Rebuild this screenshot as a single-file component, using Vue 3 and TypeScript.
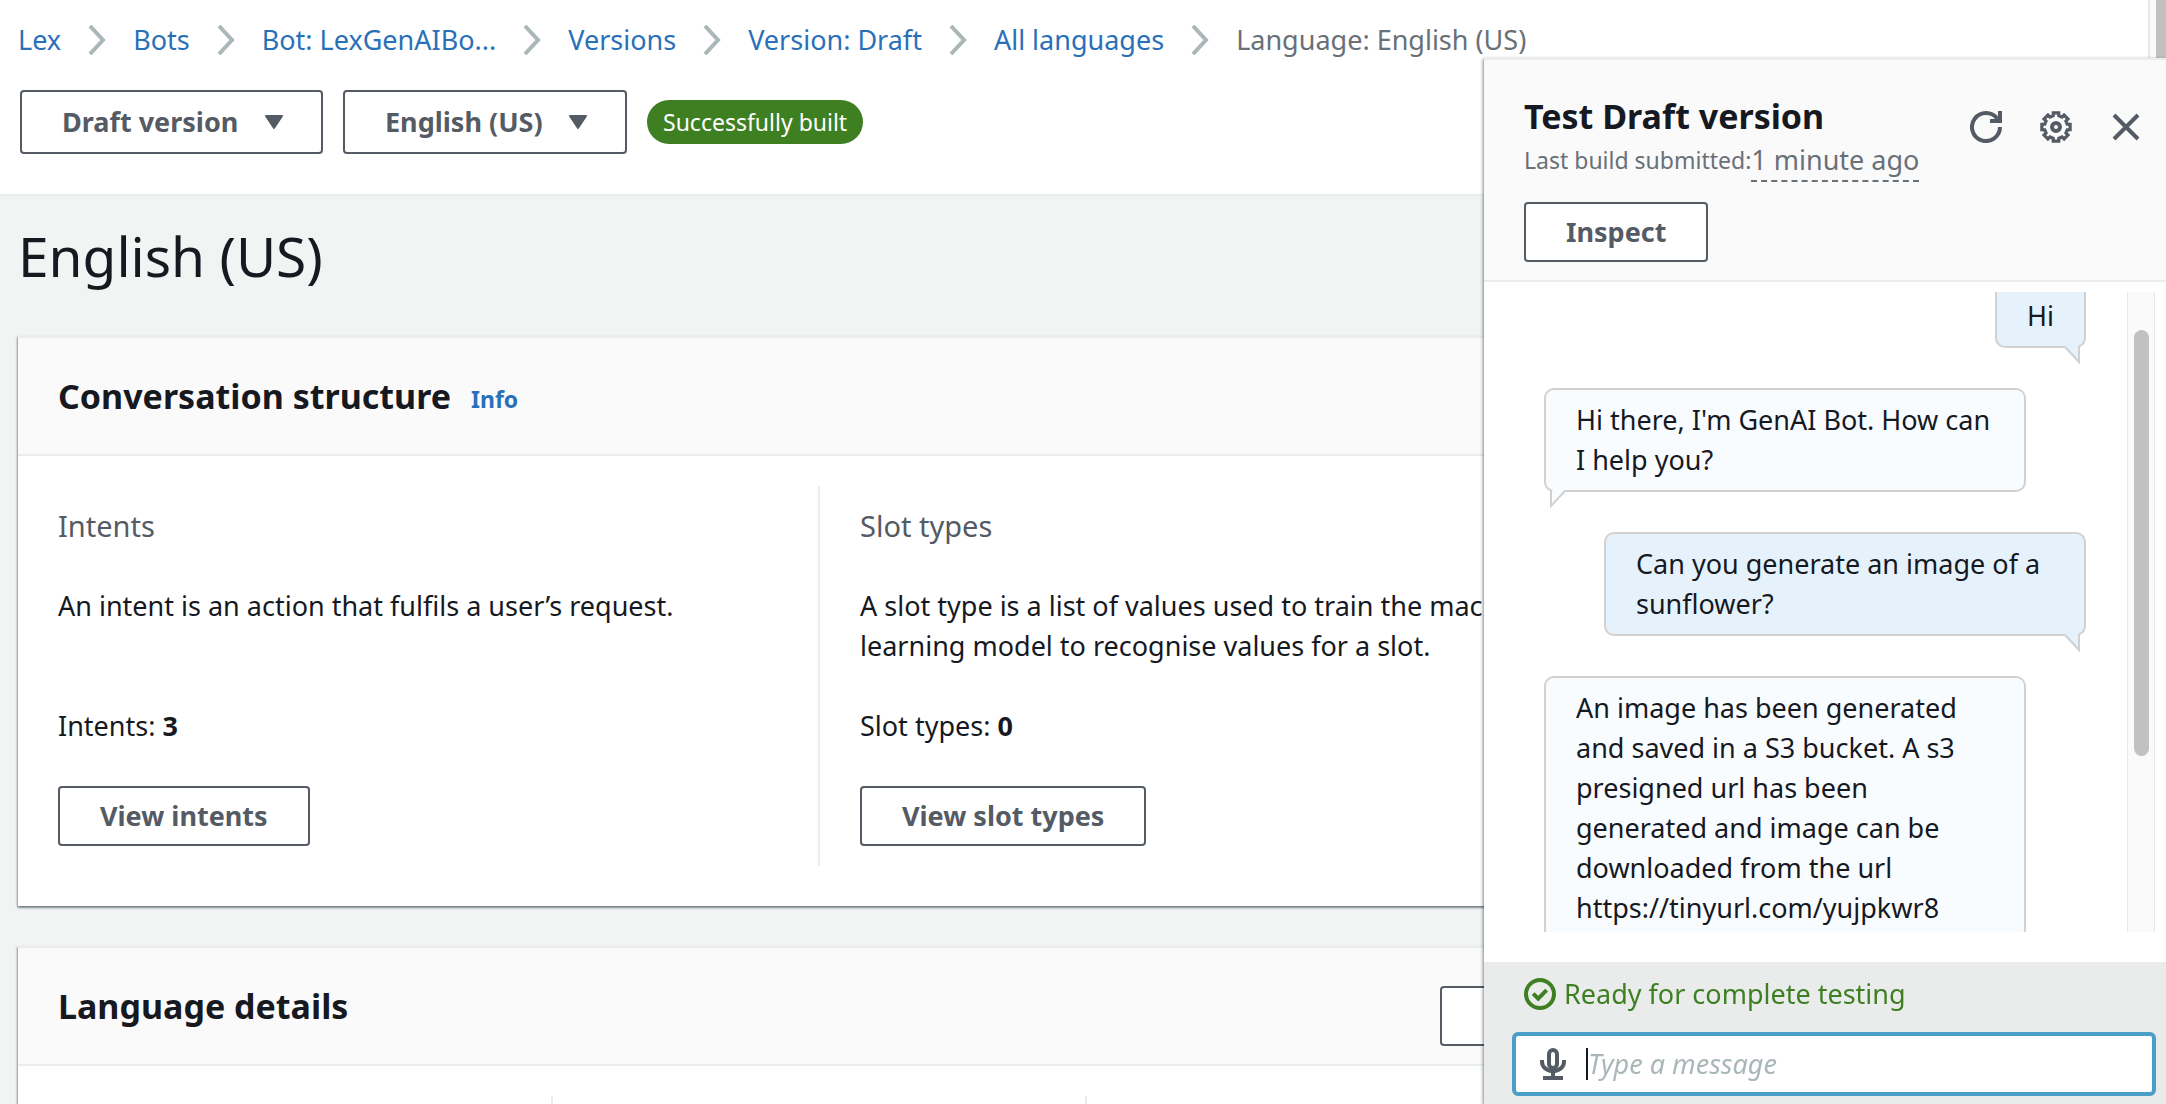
<script setup lang="ts">
import { onMounted, ref } from 'vue'

interface Message {
  from: 'user' | 'bot'
  text: string
}

const crumbs: string[] = ['Lex', 'Bots', 'Bot: LexGenAIBo...', 'Versions', 'Version: Draft', 'All languages']

const messages: Message[] = [
  { from: 'user', text: 'Hi' },
  { from: 'bot', text: "Hi there, I'm GenAI Bot. How can I help you?" },
  { from: 'user', text: 'Can you generate an image of a sunflower?' },
  {
    from: 'bot',
    text: 'An image has been generated and saved in a S3 bucket. A s3 presigned url has been generated and image can be downloaded from the url https://tinyurl.com/yujpkwr8',
  },
]

// Outline of the eight-toothed settings gear, centred in a 16-unit box.
function gearPath(): string {
  const points: string[] = []
  for (let tooth = 0; tooth < 8; tooth++) {
    const middle = tooth * 45
    const corners: [number, number][] = [[-14, 5.8], [-11, 7.2], [11, 7.2], [14, 5.8]]
    for (const [offset, radius] of corners) {
      const angle = ((middle + offset) * Math.PI) / 180
      points.push(`${(8 + radius * Math.cos(angle)).toFixed(2)} ${(8 + radius * Math.sin(angle)).toFixed(2)}`)
    }
  }
  return `M${points.join('L')}Z`
}

const gear = gearPath()
const draft = ref('')
const log = ref<HTMLElement | null>(null)

onMounted(() => {
  if (log.value) log.value.scrollTop = 8
})
</script>

<template>
  <div class="page">
    <header class="top">
      <nav class="crumbs" aria-label="Breadcrumb">
        <template v-for="crumb in crumbs" :key="crumb">
          <a href="#">{{ crumb }}</a>
          <svg class="chevron" viewBox="0 0 18 30" aria-hidden="true"><path d="M2 1 15 15 2 29" /></svg>
        </template>
        <span>Language: English (US)</span>
      </nav>
      <div class="controls">
        <div class="picker">
          <select aria-label="Version"><option>Draft version</option></select>
          <svg viewBox="0 0 20 16" aria-hidden="true"><path d="M2 2h16l-8 12z" /></svg>
        </div>
        <div class="picker">
          <select aria-label="Language"><option>English (US)</option></select>
          <svg viewBox="0 0 20 16" aria-hidden="true"><path d="M2 2h16l-8 12z" /></svg>
        </div>
        <span class="badge">Successfully built</span>
      </div>
    </header>

    <main class="main">
      <h1>English (US)</h1>

      <section class="card">
        <div class="card-head">
          <h2>Conversation structure</h2>
          <a class="info" href="#">Info</a>
        </div>
        <div class="columns two">
          <div class="column">
            <h3>Intents</h3>
            <p class="text">An intent is an action that fulfils a user’s request.</p>
            <p>Intents: <b>3</b></p>
            <button type="button" class="button">View intents</button>
          </div>
          <div class="column">
            <h3>Slot types</h3>
            <p class="text">A slot type is a list of values used to train the machine learning model to recognise values for a slot.</p>
            <p>Slot types: <b>0</b></p>
            <button type="button" class="button">View slot types</button>
          </div>
        </div>
      </section>

      <section class="card">
        <div class="card-head">
          <h2>Language details</h2>
          <button type="button" class="button edit">Edit</button>
        </div>
        <div class="columns three">
          <div class="column"></div>
          <div class="column"></div>
          <div class="column"></div>
        </div>
      </section>
    </main>

    <div class="page-scroll" aria-hidden="true"></div>

    <aside class="panel">
      <div class="panel-head">
        <div class="panel-title">
          <h2>Test Draft version</h2>
          <p class="build">Last build submitted:<span class="ago">1 minute ago</span></p>
          <button type="button" class="button">Inspect</button>
        </div>
        <div class="tools">
          <button type="button" aria-label="Refresh">
            <svg viewBox="0 0 16 16"><path d="M15 8a7 7 0 1 1-1.3-4.06" /><path d="M10 5h5V0" /></svg>
          </button>
          <button type="button" aria-label="Settings">
            <svg viewBox="0 0 16 16"><path class="gear" :d="gear" /><circle cx="8" cy="8" r="2" /></svg>
          </button>
          <button type="button" aria-label="Close">
            <svg viewBox="0 0 16 16"><path d="m2 2 12 12M14 2 2 14" /></svg>
          </button>
        </div>
      </div>

      <div class="chat">
        <div ref="log" class="log">
          <div v-for="message in messages" :key="message.text" class="bubble" :class="message.from">
            {{ message.text }}
            <svg class="tail" viewBox="0 0 16 18" aria-hidden="true">
              <path class="tail-fill" d="M1 0h14v17z" />
              <path class="tail-line" d="M1 1 15 16V0" />
            </svg>
          </div>
        </div>
        <div class="track" aria-hidden="true"><div class="thumb"></div></div>
      </div>

      <div class="panel-foot">
        <p class="status">
          <svg viewBox="0 0 16 16" aria-hidden="true"><circle cx="8" cy="8" r="7" /><path d="m4.6 7.8 2.5 2.5 4.2-4.2" /></svg>
          Ready for complete testing
        </p>
        <div class="compose">
          <button type="button" class="mic" aria-label="Speak">
            <svg viewBox="0 0 26 32">
              <rect x="9" y="2" width="8" height="18" rx="4" />
              <path d="M2 12v2a11 9 0 0 0 22 0v-2M13 23v6M3 30h20" />
            </svg>
          </button>
          <span class="cursor" aria-hidden="true"></span>
          <input v-model="draft" type="text" aria-label="Message" placeholder="Type a message" />
        </div>
      </div>
    </aside>
  </div>
</template>

<style>
body {
  overflow: hidden;
}
</style>

<style scoped>
.page {
  height: 100vh;
  overflow: hidden;
  background: #f2f3f3;
  color: #16191f;
  font: 27px/40px "Noto Sans", "Open Sans", sans-serif;
}
.page * {
  box-sizing: border-box;
}
h1, h2, h3, p {
  margin: 0;
}
a {
  color: #2a70b8;
  text-decoration: none;
}
button, select, input {
  font: inherit;
  color: inherit;
}
.top {
  padding: 20px 18px 40px;
  background: #fff;
  border-bottom: 2px solid #eaeded;
}
.crumbs {
  display: flex;
  align-items: center;
  gap: 27px;
  white-space: nowrap;
  color: #687078;
}
.chevron {
  width: 18px;
  height: 30px;
  fill: none;
  stroke: #aab7b8;
  stroke-width: 4px;
}
.controls {
  display: flex;
  align-items: center;
  gap: 20px;
  margin: 30px 2px 0;
}
.picker {
  position: relative;
}
.picker select {
  appearance: none;
  height: 64px;
  padding: 0 82px 0 40px;
  border: 2px solid #545b64;
  border-radius: 4px;
  background: #fff;
  color: #545b64;
  font-weight: 700;
}
.picker svg {
  position: absolute;
  top: 24px;
  right: 39px;
  width: 20px;
  height: 16px;
  fill: #545b64;
  stroke: #545b64;
  stroke-width: 2px;
  stroke-linejoin: round;
  pointer-events: none;
}
.badge {
  height: 44px;
  padding: 0 16px;
  border-radius: 22px;
  background: #3e7f22;
  color: #fff;
  font-size: 23px;
  line-height: 44px;
}
.main {
  display: flex;
  flex-direction: column;
  max-width: 1622px;
  padding: 30px 0 0 18px;
}
h1 {
  margin-bottom: 50px;
  font-size: 55px;
  line-height: 60px;
  font-weight: 400;
}
.card {
  margin-bottom: 40px;
  background: #fff;
  border-top: 2px solid #eaeded;
  box-shadow: 0 2px 2px rgba(0, 28, 36, 0.4), -1px 1px 2px rgba(0, 28, 36, 0.3);
}
.card-head {
  display: flex;
  align-items: center;
  gap: 20px;
  height: 118px;
  padding: 0 40px;
  background: #fafafa;
  border-bottom: 2px solid #eaeded;
}
h2 {
  font-size: 34px;
  line-height: 40px;
  font-weight: 700;
}
.info {
  padding-top: 6px;
  font-size: 23px;
  font-weight: 700;
}
.columns {
  display: grid;
  padding: 30px 0 40px;
}
.two {
  grid-template-columns: repeat(2, 1fr);
}
.three {
  grid-template-columns: repeat(3, 1fr);
}
.column {
  display: flex;
  flex-direction: column;
  align-items: flex-start;
  gap: 40px;
  min-height: 200px;
  padding: 20px 40px;
}
.column:not(:last-child) {
  border-right: 2px solid #eaeded;
}
.text {
  flex: 1;
}
h3 {
  color: #545b64;
  font-size: 29px;
  line-height: 40px;
  font-weight: 400;
}
.button {
  height: 60px;
  padding: 0 40px;
  border: 2px solid #545b64;
  border-radius: 4px;
  background: #fff;
  color: #545b64;
  font-weight: 700;
}
.edit {
  align-self: flex-end;
  min-width: 142px;
  margin: 0 0 18px auto;
}
.page-scroll {
  position: fixed;
  top: 0;
  right: 0;
  width: 18px;
  height: 100%;
  background: #c1c1c1;
  border-left: 2px solid #e8e8e8;
  box-shadow: inset 6px 0 #fafafa;
}
.panel {
  position: fixed;
  top: 58px;
  right: 0;
  bottom: 0;
  display: flex;
  flex-direction: column;
  width: 682px;
  background: #fff;
  border-top: 2px solid #eaeded;
  box-shadow: -1px 1px 3px rgba(0, 28, 36, 0.5);
}
.panel-head {
  display: flex;
  justify-content: space-between;
  padding: 36px 24px 18px 40px;
  background: #fafafa;
  border-bottom: 2px solid #eaeded;
}
.build {
  display: flex;
  margin: 4px 0 20px;
  color: #687078;
  font-size: 23px;
}
.ago {
  border-bottom: 2px dashed #687078;
  font-size: 27px;
}
.tools {
  display: flex;
  align-items: flex-start;
  gap: 38px;
  padding-top: 15px;
}
.tools button, .mic {
  display: flex;
  padding: 0;
  border: 0;
  background: none;
}
.tools svg {
  width: 32px;
  height: 32px;
  fill: none;
  stroke: #545b64;
  stroke-width: 2px;
}
.tools .gear {
  stroke-width: 1.6;
}
.chat {
  display: flex;
  flex: 1;
  min-height: 0;
  margin: 10px 11px 30px 60px;
}
.log {
  display: flex;
  flex: 1;
  flex-direction: column;
  gap: 40px;
  overflow-y: auto;
  scrollbar-width: none;
  padding-right: 41px;
}
.bubble {
  position: relative;
  flex: none;
  max-width: 482px;
  padding: 10px 30px;
  border: 2px solid #d1d1d1;
  border-radius: 10px;
}
.user {
  align-self: flex-end;
  background: #e5f2fc;
}
.bot {
  align-self: flex-start;
  background: #f9fcff;
}
.tail {
  position: absolute;
  right: 4px;
  bottom: -18px;
  width: 16px;
  height: 18px;
}
.bot .tail {
  right: auto;
  left: 4px;
  transform: scaleX(-1);
}
.tail-fill {
  fill: #e5f2fc;
}
.bot .tail-fill {
  fill: #f9fcff;
}
.tail-line {
  fill: none;
  stroke: #d1d1d1;
  stroke-width: 2px;
}
.track {
  width: 28px;
  padding: 38px 5px 0 6px;
  background: #fafafa;
  border: solid #e8e8e8;
  border-width: 0 1px;
}
.thumb {
  height: 426px;
  border-radius: 8px;
  background: #c1c1c1;
}
.panel-foot {
  padding: 12px 10px 8px 28px;
  background: #eaecec;
}
.status {
  display: flex;
  align-items: center;
  gap: 8px;
  margin: 0 0 18px 12px;
  color: #3e7f22;
}
.status svg {
  width: 32px;
  height: 32px;
  fill: none;
  stroke: #3e7f22;
  stroke-width: 2px;
}
.compose {
  display: flex;
  align-items: center;
  height: 64px;
  padding: 0 24px;
  border: 4px solid #4a9fc9;
  border-radius: 6px;
  background: #fff;
}
.mic svg {
  width: 26px;
  height: 32px;
  fill: none;
  stroke: #545b64;
  stroke-width: 4px;
}
.cursor {
  width: 2px;
  height: 32px;
  margin-left: 20px;
  background: #16191f;
}
.compose input {
  flex: 1;
  min-width: 0;
  padding: 0;
  border: 0;
  outline: 0;
  background: none;
}
.compose input::placeholder {
  color: #aab7b8;
  font-style: italic;
  opacity: 1;
}
</style>
